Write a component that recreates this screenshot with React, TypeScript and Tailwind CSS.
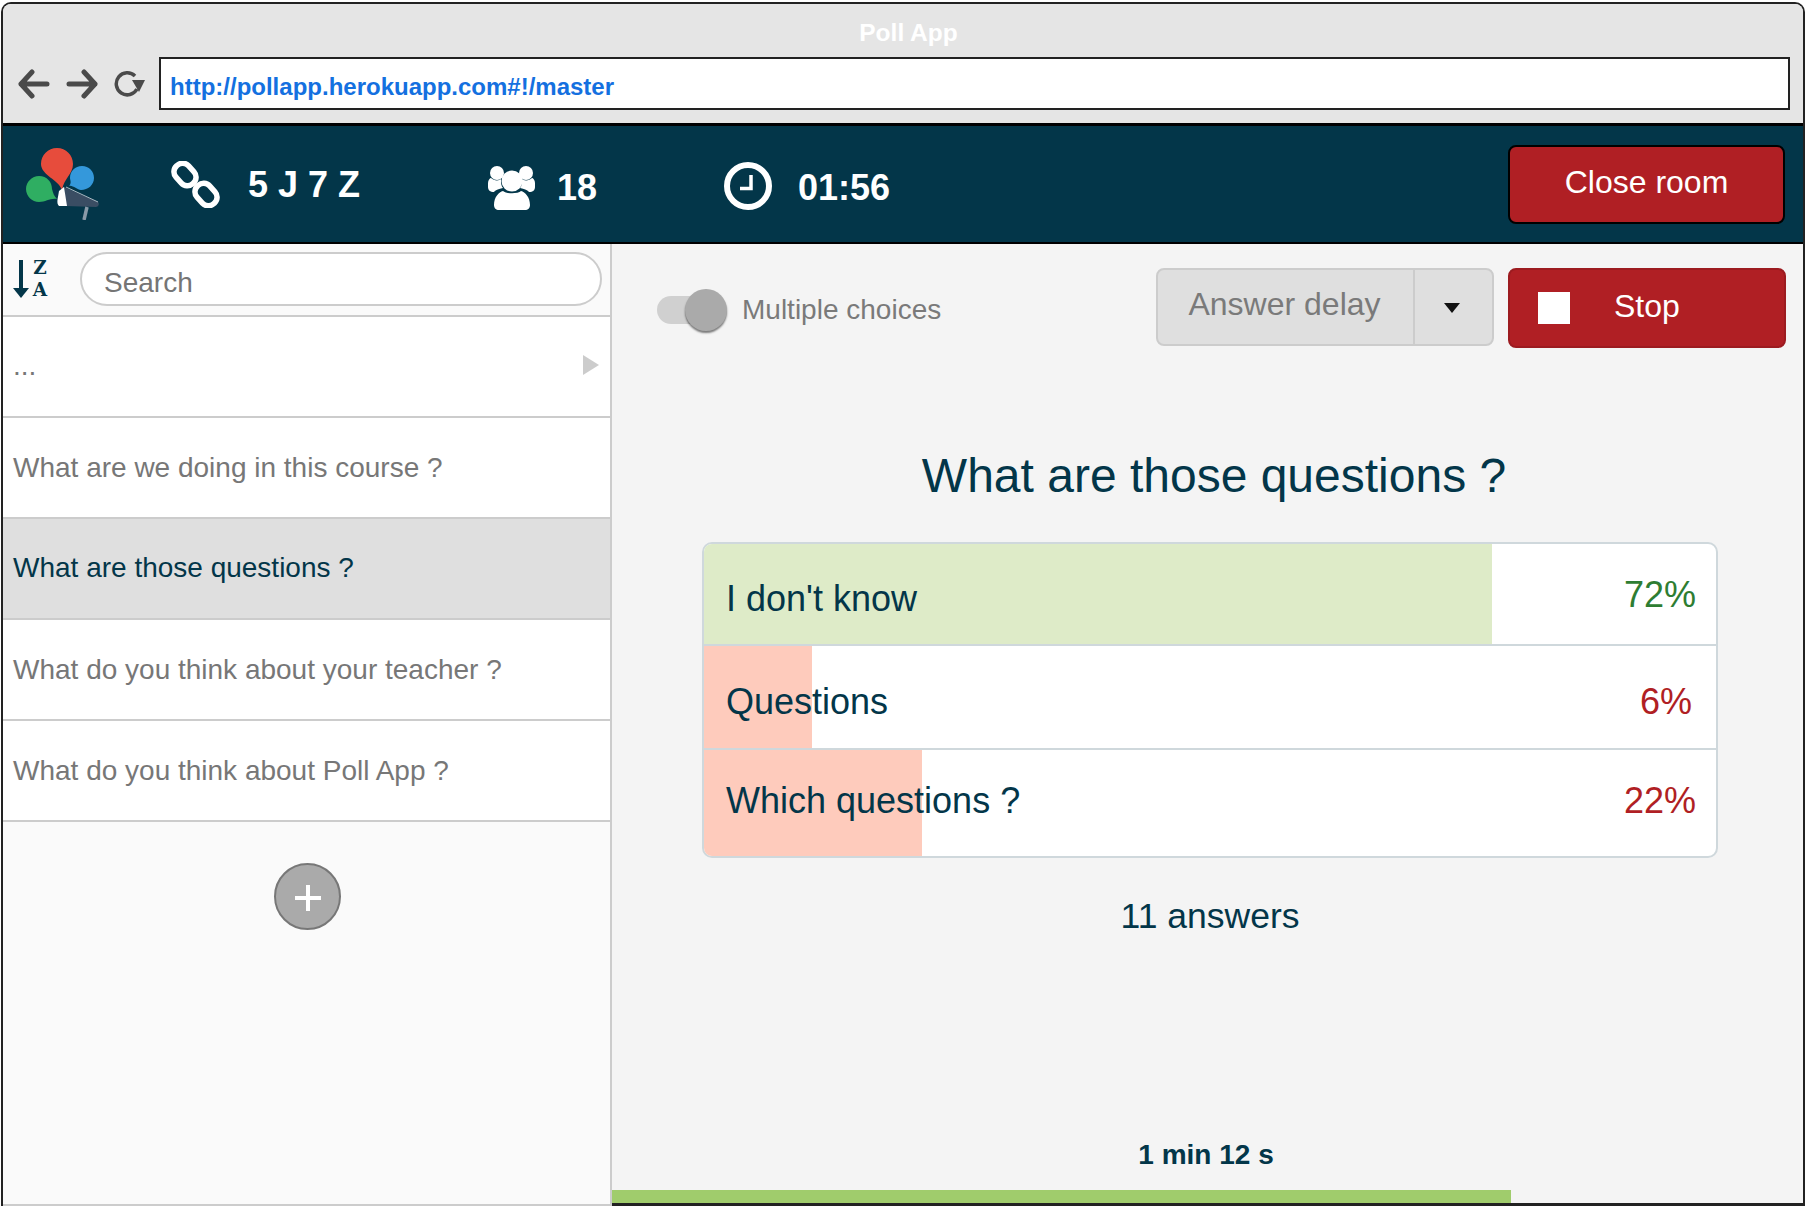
const rows = [
  { label: "...", arrow: true },
  { label: "What are we doing in this course ?" },
  { label: "What are those questions ?", active: true },
  { label: "What do you think about your teacher ?" },
  { label: "What do you think about Poll App ?" },
];

function Logo() {
  return (
    <svg width="74" height="72" viewBox="0 0 74 72" className="shrink-0">
      <path d="M31 0C40 0 47 7 47 16C47 26 38 30 36 42C33 32 15 27 15 16C15 7 22 0 31 0Z" fill="#e74c3c" />
      <path d="M56 18C63 18 68 23 68 30C68 37 62 42 55 42C51 42 47 37 43 38C46 35 44 32 44 30C44 23 49 18 56 18Z" fill="#3498db" />
      <path d="M13 28C21 28 26 34 26 41C27 45 28 48 31 51C24 50 20 54 13 54C6 54 0 48 0 41C0 34 6 28 13 28Z" fill="#2fae62" />
      <path d="M38 39L72 54C74 56 72 59 70 59L40 58Z" fill="#3a4d63" />
      <path d="M40 39L72 54" stroke="#aab8c2" strokeWidth="1" fill="none" />
      <path d="M33 43L38 39L41 58L33 58C30 55 32 50 33 43Z" fill="#ffffff" />
      <path d="M61 59L58 72" stroke="#8a9aa8" strokeWidth="3.5" fill="none" />
    </svg>
  );
}

function LinkIcon() {
  return (
    <svg width="49" height="47" viewBox="0 0 49 47" fill="none" stroke="#ffffff" strokeWidth="5.5" className="shrink-0">
      <rect x="2" y="5" width="24" height="17" rx="8" transform="rotate(48 14 13.5)" />
      <rect x="23" y="25" width="24" height="17" rx="8" transform="rotate(48 35 33.5)" />
    </svg>
  );
}

function UsersIcon() {
  return (
    <svg width="47" height="44" viewBox="0 0 47 44" fill="#ffffff" className="shrink-0">
      <circle cx="9" cy="7" r="7" />
      <circle cx="38" cy="7" r="7" />
      <path d="M0 17C0 14 2 12 3 12C6 15 11 15 13 13C13 17 13 20 15 22C9 23 7 25 6 26C2 26 0 24 0 21Z" />
      <path d="M47 17C47 14 45 12 44 12C41 15 36 15 34 13C34 17 34 20 32 22C38 23 40 25 41 26C45 26 47 24 47 21Z" />
      <circle cx="24" cy="15" r="10.5" />
      <path d="M6 39C6 31 11 26 15 25C18 28 30 28 33 25C37 26 42 31 42 39C42 42 40 44 37 44H11C8 44 6 42 6 39Z" />
    </svg>
  );
}

function ClockIcon() {
  return (
    <svg width="48" height="48" viewBox="0 0 48 48" fill="none" stroke="#ffffff" className="shrink-0">
      <circle cx="24" cy="24" r="21" strokeWidth="6" />
      <path d="M27 13V26.5H16" strokeWidth="3.5" />
    </svg>
  );
}

function SortIcon() {
  return (
    <div className="flex items-center gap-[3px] pb-[2px]">
      <svg width="16" height="38" viewBox="0 0 16 38" fill="#033649" className="shrink-0">
        <rect x="6" y="0" width="4" height="30" />
        <path d="M0 28H16L8 38Z" />
      </svg>
      <div className="flex w-[16px] flex-col items-center font-['DejaVu_Serif',serif] text-[18.5px] leading-[21.5px] font-bold text-[#033649]">
        <span>Z</span>
        <span>A</span>
      </div>
    </div>
  );
}

export default function App() {
  return (
    <div className="h-[1206px] w-[1808px] overflow-hidden bg-white pt-[2px] pl-[1px] font-['Liberation_Sans',Arial,sans-serif]">
      <div className="flex h-[1204px] w-[1804px] flex-col rounded-t-[10px] border-x-2 border-t-2 border-[#222222]">
        {/* Browser chrome */}
        <div className="h-[119px] shrink-0 rounded-t-[8px] bg-[#e5e5e5] pt-[14px]">
          <div className="pl-[11px] text-center text-[24.5px] leading-[30px] font-bold text-white">Poll App</div>
          <div className="mt-[9px] flex items-center pl-[15px]">
            <svg width="32" height="30" viewBox="0 0 32 30" fill="none" stroke="#4a4a4a" strokeWidth="5" strokeLinecap="round" strokeLinejoin="round" className="shrink-0">
              <path d="M14 3L3 15L14 27M3 15H29" />
            </svg>
            <svg width="32" height="30" viewBox="0 0 32 30" fill="none" stroke="#4a4a4a" strokeWidth="5" strokeLinecap="round" strokeLinejoin="round" className="ml-[16px] shrink-0">
              <path d="M18 3L29 15L18 27M3 15H29" />
            </svg>
            <svg width="31" height="26" viewBox="0 0 31 26" fill="none" className="ml-[16px] shrink-0">
              <path d="M23 18A11 11 0 1 1 21 5" stroke="#4a4a4a" strokeWidth="3.5" />
              <path d="M18 9H31L25 21Z" fill="#4a4a4a" />
            </svg>
            <div className="ml-[14px] flex h-[53px] w-[1631px] items-center border-2 border-[#222222] bg-white pt-[7px] pl-[9px] text-[24px] font-bold text-[#1470e0]">
              http://pollapp.herokuapp.com#!/master
            </div>
          </div>
        </div>

        {/* App header */}
        <div className="flex h-[121px] shrink-0 items-center border-t-[3px] border-b-2 border-black bg-[#033649] pl-[23px] text-[36px] leading-none font-bold text-white">
          <Logo />
          <div className="ml-[71px]">
            <LinkIcon />
          </div>
          <span className="ml-[28px] w-[113px] pt-[2px] whitespace-nowrap">5 J 7 Z</span>
          <div className="ml-[127px] pt-[8px]">
            <UsersIcon />
          </div>
          <span className="ml-[22px] pt-[7px]">18</span>
          <div className="ml-[127px] pt-[4px]">
            <ClockIcon />
          </div>
          <span className="ml-[26px] pt-[7px]">01:56</span>
          <button className="mr-[18px] ml-auto h-[79px] w-[277px] rounded-[8px] border-2 border-black bg-[#b01f24] pb-[4px] text-[32px] font-normal text-white">
            Close room
          </button>
        </div>

        <div className="flex min-h-0 flex-1">
          {/* Question list */}
          <div className="flex w-[609px] shrink-0 flex-col border-r-2 border-b-2 border-[#cccccc] bg-[#fafafa]">
            <div className="flex h-[73px] shrink-0 items-center border-b-2 border-[#cccccc] pl-[10px]">
              <SortIcon />
              <div className="mb-[2px] ml-[32px] flex h-[54px] w-[522px] items-center rounded-full border-2 border-[#cccccc] bg-white pt-[9px] pl-[22px] text-[28px] text-[#757575]">
                Search
              </div>
            </div>
            {rows.map((row) => (
              <div
                key={row.label}
                className={
                  row.active
                    ? "flex h-[101px] shrink-0 items-center border-b-2 border-[#cccccc] bg-[#dfdfdf] pb-[2px] pl-[10px] text-[28px] text-[#033649]"
                    : "flex h-[101px] shrink-0 items-center justify-between border-b-2 border-[#cccccc] bg-white pl-[10px] text-[28px] text-[#777777]"
                }
              >
                <span className={row.arrow ? "pb-[2px]" : ""}>{row.label}</span>
                {row.arrow && (
                  <svg width="16" height="20" viewBox="0 0 16 20" fill="#cccccc" className="mr-[11px] mb-[4px] shrink-0">
                    <path d="M0 0L16 10L0 20Z" />
                  </svg>
                )}
              </div>
            ))}
            <div className="mt-[41px] ml-[271px] flex h-[67px] w-[67px] items-center justify-center rounded-full border-2 border-[#777777] bg-[#aaaaaa]">
              <svg width="26" height="26" viewBox="0 0 26 26" fill="#ffffff" className="mt-[3px]">
                <rect x="11" y="0" width="4" height="26" />
                <rect x="0" y="11" width="26" height="4" />
              </svg>
            </div>
          </div>

          {/* Poll panel */}
          <div className="flex min-w-0 flex-1 flex-col border-b-[3px] border-[#222222] bg-[#f4f4f4]">
            <div className="flex items-start pt-[24px] pr-[17px] pl-[45px]">
              <div className="mt-[21px] flex items-center">
                <div className="relative h-[42px] w-[70px]">
                  <div className="absolute top-[7px] left-0 h-[28px] w-[56px] rounded-full bg-[#d0d0d0]" />
                  <div className="absolute top-0 right-0 h-[42px] w-[42px] rounded-full bg-[#aaaaaa] shadow-[0_2px_2px_rgba(0,0,0,0.5)]" />
                </div>
                <span className="ml-[15px] text-[28px] text-[#7a7a7a]">Multiple choices</span>
              </div>
              <div className="ml-auto flex h-[78px] w-[338px] items-stretch rounded-[8px] border-2 border-[#cccccc] bg-[#dfdfdf] text-[32px] text-[#7a7a7a]">
                <div className="flex w-[255px] items-center justify-center pr-[2px] pb-[6px]">Answer delay</div>
                <div className="flex flex-1 items-center justify-center border-l-2 border-[#cccccc] pt-[2px] pr-[3px]">
                  <svg width="16" height="10" viewBox="0 0 16 10" fill="#111111">
                    <path d="M0 0H16L8 10Z" />
                  </svg>
                </div>
              </div>
              <button className="ml-[14px] flex h-[80px] w-[278px] items-center rounded-[8px] border-2 border-[#9c1b20] bg-[#b01f24] pl-[28px] text-[32px] text-white">
                <span className="h-[32px] w-[32px] bg-white" />
                <span className="ml-[44px] pb-[4px]">Stop</span>
              </button>
            </div>

            <div className="mt-[98px] ml-[90px] w-[1016px] pl-[8px] text-center text-[48px] leading-[60px] text-[#033649]">
              What are those questions ?
            </div>

            <div className="mt-[36px] ml-[90px] w-[1016px] overflow-hidden rounded-[10px] border-2 border-[#cfd8dc] bg-white text-[36px] text-[#033649]">
              <div className="relative flex h-[102px] items-center justify-between border-b-2 border-[#cfd8dc] pr-[20px] pl-[22px]">
                <div className="absolute inset-y-0 left-0 w-[788px] bg-[#deebc8]" />
                <span className="relative pt-[10px]">I don't know</span>
                <span className="relative pt-[1px] text-[#2e7d32]">72%</span>
              </div>
              <div className="relative flex h-[104px] items-center justify-between border-b-2 border-[#cfd8dc] pr-[24px] pl-[22px]">
                <div className="absolute inset-y-0 left-0 w-[108px] bg-[#fecbbc]" />
                <span className="relative pt-[10px]">Questions</span>
                <span className="relative pt-[10px] text-[#b01f24]">6%</span>
              </div>
              <div className="relative flex h-[106px] items-center justify-between pr-[20px] pl-[22px]">
                <div className="absolute inset-y-0 left-0 w-[218px] bg-[#fecbbc]" />
                <span className="relative pb-[5px]">Which questions ?</span>
                <span className="relative pb-[5px] text-[#b01f24]">22%</span>
              </div>
            </div>

            <div className="mt-[37px] ml-[90px] w-[1016px] text-center text-[35.5px] leading-[42px] text-[#033649]">11 answers</div>

            <div className="mt-auto mb-[17px] pr-[3px] text-center text-[28px] leading-[36px] font-bold text-[#033649]">1 min 12 s</div>
            <div className="h-[13px] w-[899px] shrink-0 bg-[#a0cc6c]" />
          </div>
        </div>
      </div>
    </div>
  );
}
